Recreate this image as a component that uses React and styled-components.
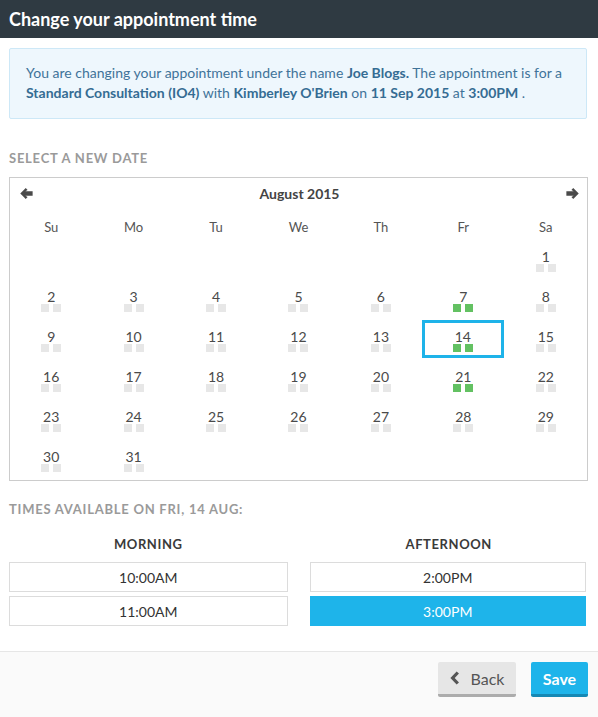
import React from "react";
import styled, { createGlobalStyle } from "styled-components";

const GlobalStyle = createGlobalStyle`
  html, body {
    margin: 0;
    padding: 0;
    background: #fff;
    font-family: Lato, "Open Sans", sans-serif;
    color: #555;
  }
`;

const Page = styled.div`
  width: 598px;
  height: 717px;
  display: flex;
  flex-direction: column;
  overflow: hidden;
`;

const TitleBar = styled.div`
  height: 38px;
  background: #2f3a42;
  color: #fff;
  font-size: 18px;
  font-weight: 700;
  line-height: 38px;
  padding-left: 9px;
`;

const Body = styled.div`
  flex: 1;
  padding: 10px 10px 0 9px;
`;

const Notice = styled.div`
  background: #eef7fd;
  border: 1px solid #cde8f7;
  border-radius: 2px;
  color: #3f7399;
  font-size: 14px;
  line-height: 20px;
  padding: 14px 15px 15px 16px;
  margin-right: 1px;

  b {
    font-weight: 700;
    color: #356c93;
  }
`;

const SectionLabel = styled.div`
  margin-top: ${(p) => p.top}px;
  color: #9a9a9a;
  font-size: 13px;
  font-weight: 700;
  letter-spacing: 0.75px;
  line-height: 16px;
  text-transform: uppercase;
`;

const Calendar = styled.div`
  margin-top: 11px;
  border: 1px solid #ccc;
`;

const NavRow = styled.div`
  height: 31px;
  display: flex;
  align-items: center;
  justify-content: space-between;
  padding: 0 8px 0 10px;
`;

const NavButton = styled.span`
  display: flex;
  width: 13px;
  height: 13px;
  color: #4a4a4a;
`;

const MonthTitle = styled.div`
  font-size: 14px;
  font-weight: 700;
  color: #444;
`;

const Grid = styled.div`
  display: grid;
  grid-template-columns: repeat(7, 1fr);
`;

const WeekDay = styled.div`
  text-align: center;
  font-size: 13px;
  line-height: 16px;
  color: #555;
  padding: 10px 0 5px;
`;

const DayCell = styled.div`
  height: 38px;
  margin-bottom: 2px;
  box-sizing: border-box;
  border: 3px solid ${(p) => (p.selected ? "#1eb3e9" : "transparent")};
  margin-right: ${(p) => (p.selected ? "1px" : "0")};
  display: flex;
  flex-direction: column;
  align-items: center;
  padding-top: 6px;
`;

const DayNumber = styled.div`
  font-size: 14px;
  line-height: 15px;
  color: #4a4a4a;
`;

const Slots = styled.div`
  display: flex;
  gap: 4px;
`;

const Slot = styled.span`
  width: 8px;
  height: 8px;
  background: ${(p) => (p.open ? "#63c162" : "#e7e7e7")};
`;

const Periods = styled.div`
  display: grid;
  grid-template-columns: 1fr 1fr;
  column-gap: 22px;
  margin-top: 19px;
`;

const Period = styled.div`
  display: flex;
  flex-direction: column;
  gap: 4px;
`;

const PeriodTitle = styled.div`
  text-align: center;
  font-size: 13px;
  font-weight: 700;
  letter-spacing: 0.6px;
  line-height: 16px;
  color: #3a3a3a;
  margin-bottom: 6px;
`;

const TimeButton = styled.div`
  height: 30px;
  box-sizing: border-box;
  border: 1px solid ${(p) => (p.active ? "#1eb4ea" : "#dcdcdc")};
  background: ${(p) => (p.active ? "#1eb4ea" : "#fff")};
  color: ${(p) => (p.active ? "#fff" : "#333")};
  font-size: 14px;
  display: flex;
  align-items: center;
  justify-content: center;
  margin-right: ${(p) => (p.right ? "2px" : "0")};
`;

const Footer = styled.div`
  height: 66px;
  box-sizing: border-box;
  border-top: 1px solid #e6e6e6;
  background: #fafafa;
  display: flex;
  justify-content: flex-end;
  align-items: flex-start;
  gap: 15px;
  padding: 10px 10px 0 0;
`;

const Button = styled.button`
  height: 35px;
  width: ${(p) => (p.primary ? "57px" : "78px")};
  box-sizing: border-box;
  border: none;
  border-radius: 2px;
  border-bottom: 3px solid ${(p) => (p.primary ? "#1588b4" : "#acacac")};
  background: ${(p) => (p.primary ? "#1eb4ea" : "#e6e6e6")};
  color: ${(p) => (p.primary ? "#fff" : "#555")};
  font-family: Lato, sans-serif;
  font-size: 16px;
  font-weight: ${(p) => (p.primary ? 700 : 400)};
  padding: 0;
  display: flex;
  align-items: center;
  justify-content: center;
  gap: 11px;
`;

const ArrowLeft = () => (
  <svg viewBox="0 0 14 13" width="13" height="13" fill="currentColor">
    <path d="M0.3 6.5 L6.2 0.6 L8.2 2.6 L5.8 4.1 L13.6 4.1 L13.6 8.9 L5.8 8.9 L8.2 10.4 L6.2 12.4 Z" />
  </svg>
);

const ArrowRight = () => (
  <svg viewBox="0 0 14 13" width="13" height="13" fill="currentColor">
    <path d="M13.7 6.5 L7.8 0.6 L5.8 2.6 L8.2 4.1 L0.4 4.1 L0.4 8.9 L8.2 8.9 L5.8 10.4 L7.8 12.4 Z" />
  </svg>
);

const Chevron = () => (
  <svg viewBox="0 0 10 14" width="10" height="14">
    <polyline points="7.8,1.5 2.6,7 7.8,12.5" fill="none" stroke="#555" strokeWidth="3.2" />
  </svg>
);

const weekDays = ["Su", "Mo", "Tu", "We", "Th", "Fr", "Sa"];
const openDays = [7, 14, 21];

export default function App() {
  const cells = [];
  for (let i = 0; i < 6; i++) cells.push(null);
  for (let d = 1; d <= 31; d++) cells.push(d);

  return (
    <Page>
      <GlobalStyle />
      <TitleBar>Change your appointment time</TitleBar>
      <Body>
        <Notice>
          You are changing your appointment under the name <b>Joe Blogs.</b> The appointment is for a{" "}
          <b>Standard Consultation (IO4)</b> with <b>Kimberley O'Brien</b> on <b>11 Sep 2015</b> at{" "}
          <b>3:00PM</b> .
        </Notice>

        <SectionLabel top={31}>Select a new date</SectionLabel>
        <Calendar>
          <NavRow>
            <NavButton>
              <ArrowLeft />
            </NavButton>
            <MonthTitle>August 2015</MonthTitle>
            <NavButton>
              <ArrowRight />
            </NavButton>
          </NavRow>
          <Grid>
            {weekDays.map((w) => (
              <WeekDay key={w}>{w}</WeekDay>
            ))}
            {cells.map((d, i) =>
              d === null ? (
                <DayCell key={"e" + i} />
              ) : (
                <DayCell key={d} selected={d === 14}>
                  <DayNumber>{d}</DayNumber>
                  <Slots>
                    <Slot open={openDays.includes(d)} />
                    <Slot open={openDays.includes(d)} />
                  </Slots>
                </DayCell>
              )
            )}
          </Grid>
        </Calendar>

        <SectionLabel top={20}>Times available on Fri, 14 Aug:</SectionLabel>
        <Periods>
          <Period>
            <PeriodTitle>MORNING</PeriodTitle>
            <TimeButton>10:00AM</TimeButton>
            <TimeButton>11:00AM</TimeButton>
          </Period>
          <Period>
            <PeriodTitle>AFTERNOON</PeriodTitle>
            <TimeButton right>2:00PM</TimeButton>
            <TimeButton right active>
              3:00PM
            </TimeButton>
          </Period>
        </Periods>
      </Body>
      <Footer>
        <Button>
          <Chevron />
          Back
        </Button>
        <Button primary>Save</Button>
      </Footer>
    </Page>
  );
}
